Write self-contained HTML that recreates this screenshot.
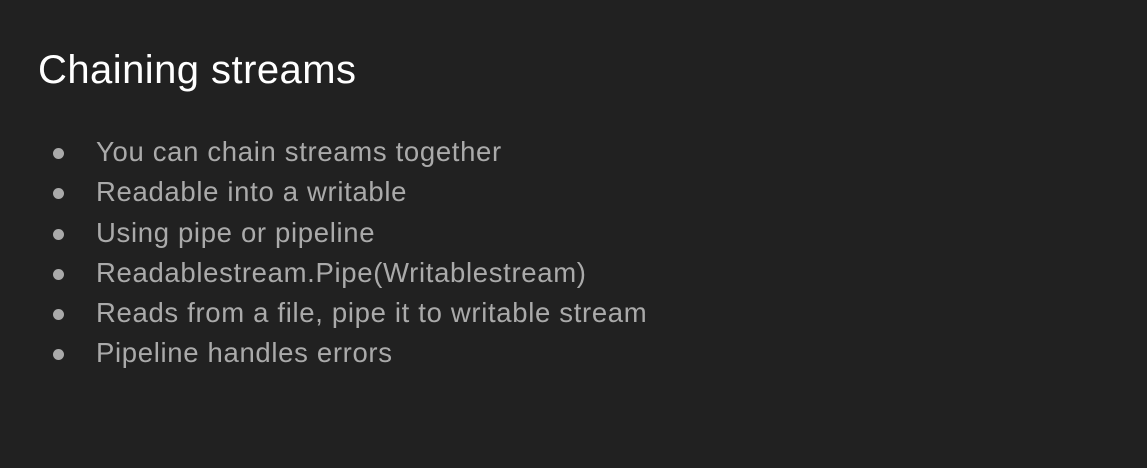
<!DOCTYPE html>
<html><head><style>
html,body{margin:0;padding:0;}
body{width:1147px;height:468px;background:#212121;font-family:"Liberation Sans",sans-serif;position:relative;overflow:hidden;}
h1{position:absolute;left:38px;top:46px;margin:0;font-size:40px;letter-spacing:0.45px;font-weight:normal;color:#fff;line-height:48px;}
ul{position:absolute;left:0;top:132px;margin:0;padding:0;list-style:none;}
li{position:relative;padding-left:96px;font-size:27.5px;letter-spacing:0.67px;line-height:40.3px;color:#aaaaaa;white-space:nowrap;}
li:before{content:"";position:absolute;left:53px;top:16px;width:11px;height:11px;border-radius:50%;background:#aaaaaa;}
</style></head><body>
<h1>Chaining streams</h1>
<ul>
<li>You can chain streams together</li>
<li>Readable into a writable</li>
<li>Using pipe or pipeline</li>
<li>Readablestream.Pipe(Writablestream)</li>
<li>Reads from a file, pipe it to writable stream</li>
<li>Pipeline handles errors</li>
</ul>
</body></html>
